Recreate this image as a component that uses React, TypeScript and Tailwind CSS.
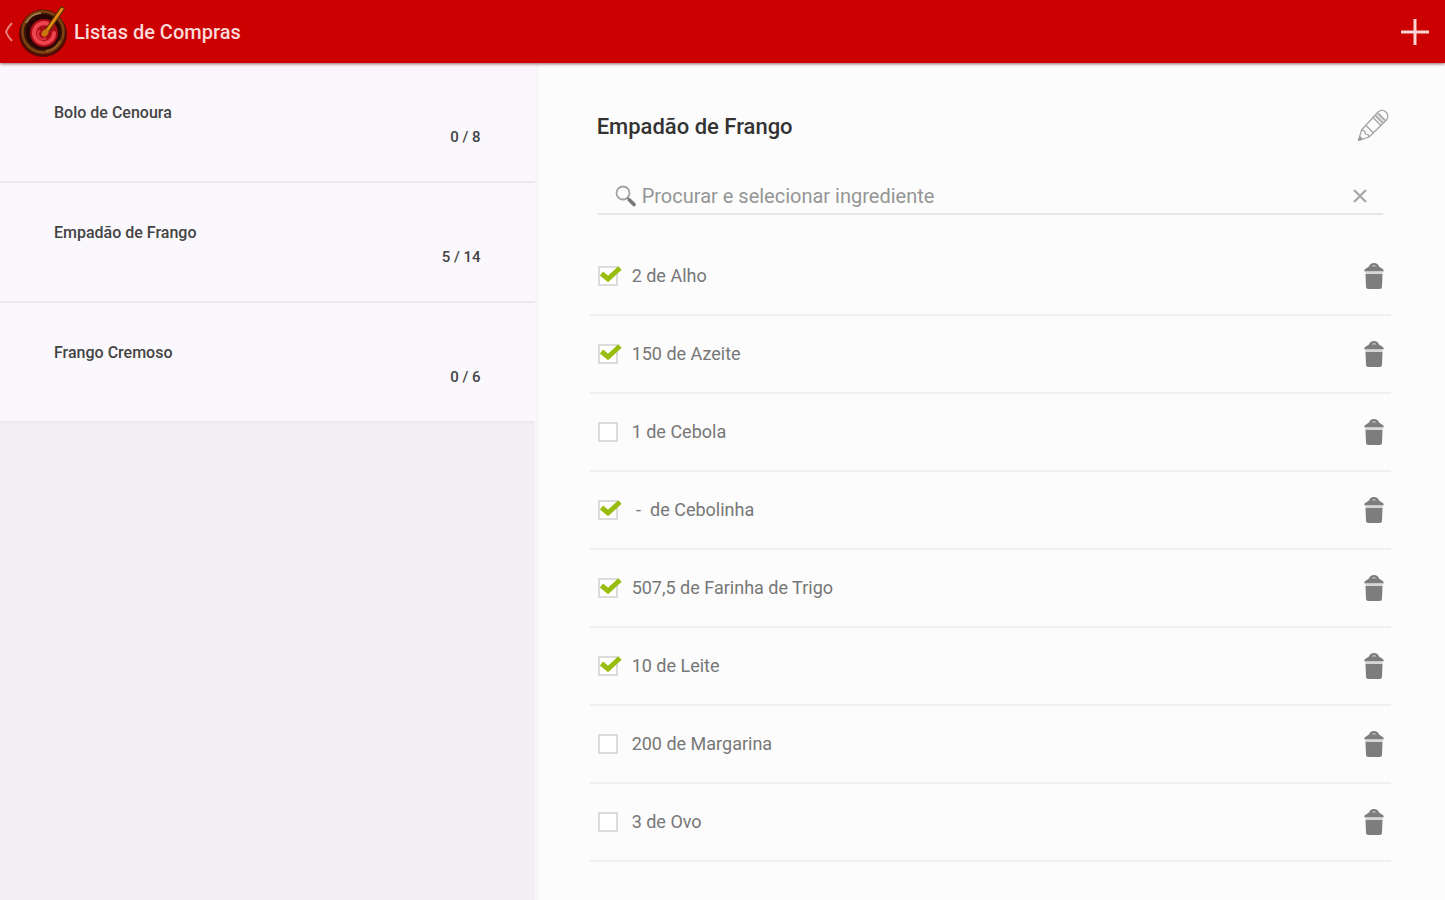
import { useState } from "react";

type ShoppingList = {
  id: string;
  name: string;
  done: number;
  total: number;
};

type Ingredient = {
  id: string;
  label: string;
  checked: boolean;
};

const LISTS: ShoppingList[] = [
  { id: "bolo", name: "Bolo de Cenoura", done: 0, total: 8 },
  { id: "empadao", name: "Empadão de Frango", done: 5, total: 14 },
  { id: "frango", name: "Frango Cremoso", done: 0, total: 6 },
];

const INGREDIENTS: Ingredient[] = [
  { id: "alho", label: "2 de Alho", checked: true },
  { id: "azeite", label: "150 de Azeite", checked: true },
  { id: "cebola", label: "1 de Cebola", checked: false },
  { id: "cebolinha", label: " -  de Cebolinha", checked: true },
  { id: "farinha", label: "507,5 de Farinha de Trigo", checked: true },
  { id: "leite", label: "10 de Leite", checked: true },
  { id: "margarina", label: "200 de Margarina", checked: false },
  { id: "ovo", label: "3 de Ovo", checked: false },
];

function Logo() {
  return (
    <svg viewBox="0 0 52 52" className="size-[52px]" aria-hidden="true">
      <ellipse cx="25" cy="28" rx="24" ry="23" fill="#5a0a04" />
      <circle cx="25" cy="26" r="22.5" fill="#3a1a08" />
      <circle cx="25" cy="26" r="20.5" fill="none" stroke="#80420f" strokeWidth="2.5" />
      <path d="M8 17a19 19 0 0 1 15-10" fill="none" stroke="#a8845a" strokeWidth="1.5" />
      <path d="M42 35a19 19 0 0 1-14 10" fill="none" stroke="#a4621e" strokeWidth="1.5" />
      <circle cx="25" cy="26" r="17.5" fill="#2a0505" />
      <circle cx="26" cy="27" r="14" fill="#a80c14" />
      <path
        d="M30 18a10 10 0 1 0 6 9"
        fill="none"
        stroke="#ee4450"
        strokeWidth="4"
        strokeLinecap="round"
      />
      <path d="M22 24a5 5 0 0 0 6 8" fill="none" stroke="#d8303a" strokeWidth="2.5" />
      <path d="M28 26L44 3" stroke="#5c2a04" strokeWidth="5" strokeLinecap="round" />
      <path d="M28 26L44 3" stroke="#e08a14" strokeWidth="3" strokeLinecap="round" />
      <ellipse cx="27" cy="27" rx="4" ry="3" transform="rotate(-50 27 27)" fill="#c8780f" />
    </svg>
  );
}

function SearchIcon() {
  return (
    <svg viewBox="0 0 22 22" className="size-[22px] shrink-0" fill="none" aria-hidden="true">
      <circle cx="9" cy="8" r="6.5" stroke="#a3a3a3" strokeWidth="1.8" />
      <path d="M13 12.5L15.5 15" stroke="#888" strokeWidth="2" />
      <path d="M15.5 15L20 19.5" stroke="#777" strokeWidth="3.6" strokeLinecap="round" />
    </svg>
  );
}

function PencilIcon() {
  return (
    <svg
      viewBox="0 0 32 34"
      className="h-[34px] w-8"
      fill="none"
      stroke="#a0a0a0"
      strokeWidth="1.2"
      strokeLinejoin="round"
      aria-hidden="true"
    >
      <path d="M1.5 32.5L4.5 22L21 4Q25 0.5 29 4Q32.5 8 29.5 12L12 29Z" />
      <path d="M4.5 22L7.5 23L8.5 26L11 26.5L12 29M9 17.5L16.5 25M16 9.5L24 17.5" />
      <path d="M18.5 7.5L26 15M21 5.5L28 12.5" stroke="#b0b0b0" strokeWidth="2.4" />
      <path d="M1.5 32.5L2.7 28.5L5.5 31.2Z" fill="#999" />
    </svg>
  );
}

function TrashIcon() {
  return (
    <svg viewBox="0 0 20 28" className="h-7 w-5" fill="#7d7d7d" aria-hidden="true">
      <path d="M5 4.5Q6 1 10 1Q14 1 15 4.5L19.5 7.5V9.5H0.5V7.5Z" />
      <path d="M7.5 4.5Q10 1.5 12.5 4.5Z" fill="#c4c4c4" />
      <path d="M1.5 9.5H18.5V12H1.5Z" fill="#d6d6d6" />
      <path d="M1.5 12H18.5L18 24.5Q18 27 15.5 27H4.5Q2 27 2 24.5Z" />
    </svg>
  );
}

type IngredientRowProps = {
  item: Ingredient;
  onToggle: (id: string) => void;
  onRemove: (id: string) => void;
};

function IngredientRow({ item, onToggle, onRemove }: IngredientRowProps) {
  return (
    <li className="flex h-[78px] items-center justify-between border-b-2 border-[#f0f0f0] pr-[7px] pl-2">
      <label className="flex items-center gap-[14px]">
        <span className="relative flex">
          <input
            type="checkbox"
            checked={item.checked}
            onChange={() => onToggle(item.id)}
            className="peer size-5 appearance-none border-2 border-[#dcdcdc] bg-white"
          />
          <svg
            viewBox="0 0 24 20"
            className="pointer-events-none absolute top-0 left-0 hidden h-5 w-6 peer-checked:block"
            fill="none"
            stroke="#98bd0e"
            strokeWidth="5"
            aria-hidden="true"
          >
            <path d="M3.5 7.5L10 13L22 2" />
          </svg>
        </span>
        <span className="text-[18px] leading-6 whitespace-pre text-[#777]">{item.label}</span>
      </label>
      <button type="button" aria-label={`Remover ${item.label}`} onClick={() => onRemove(item.id)}>
        <TrashIcon />
      </button>
    </li>
  );
}

export default function App() {
  const [selected, setSelected] = useState("empadao");
  const [items, setItems] = useState(INGREDIENTS);
  const [query, setQuery] = useState("");

  const handleToggle = (id: string) => {
    setItems((prev) => prev.map((i) => (i.id === id ? { ...i, checked: !i.checked } : i)));
  };

  const handleRemove = (id: string) => {
    setItems((prev) => prev.filter((i) => i.id !== id));
  };

  const current = LISTS.find((l) => l.id === selected);
  const visible = items.filter((i) => i.label.toLowerCase().includes(query.toLowerCase()));

  return (
    <div className="flex min-h-screen flex-col bg-[#fcfcfc] font-['Roboto',sans-serif]">
      <header className="z-10 flex h-[63px] items-center justify-between bg-[#cc0000] pt-px pr-4 pl-1 shadow-[0_1px_3px_rgba(90,0,0,0.6)]">
        <div className="flex items-center">
          <button type="button" aria-label="Voltar" className="flex items-center">
            <svg viewBox="0 0 10 20" className="h-5 w-[10px]" fill="none" stroke="#e88080" strokeWidth="2" aria-hidden="true">
              <path d="M8 1Q4 5 2 10Q4 15 8 19" />
            </svg>
          </button>
          <div className="ml-1">
            <Logo />
          </div>
          <h1 className="ml-1 text-[20px] leading-6 font-medium text-[#fbdada]">Listas de Compras</h1>
        </div>
        <button type="button" aria-label="Adicionar lista">
          <svg viewBox="0 0 28 28" className="size-7" stroke="#f9d4d4" strokeWidth="3" aria-hidden="true">
            <path d="M14 1V27M0 14H28" />
          </svg>
        </button>
      </header>

      <div className="flex flex-1">
        <nav className="w-[37%] shrink-0 bg-[#f1eff3]">
          <ul>
            {LISTS.map((list) => (
              <li key={list.id}>
                <button
                  type="button"
                  onClick={() => setSelected(list.id)}
                  className="flex h-[120px] w-full flex-col items-start border-b-2 border-[#ebe9ed] bg-[#faf8fc] px-[54px] pt-[38px] text-[16px] leading-6 font-medium text-[#444]"
                >
                  <span>{list.name}</span>
                  <span className="self-end text-[15px]">
                    {list.done} / {list.total}
                  </span>
                </button>
              </li>
            ))}
          </ul>
        </nav>

        <main className="flex-1 border-l-4 border-[#f8f7f9] pt-12 pr-[54px] pl-[51px]">
          <div className="flex h-8 items-center justify-between pr-[2px] pl-[7px]">
            <h2 className="text-[22px] leading-8 font-medium text-[#333]">{current?.name}</h2>
            <button type="button" aria-label="Editar lista" className="pb-1">
              <PencilIcon />
            </button>
          </div>

          <div className="mx-2 mt-9 flex h-9 items-center border-b-2 border-[#e6e6e6] px-4 pb-px">
            <SearchIcon />
            <input
              type="text"
              aria-label="Procurar e selecionar ingrediente"
              placeholder="Procurar e selecionar ingrediente"
              value={query}
              onChange={(e) => setQuery(e.target.value)}
              className="ml-[6px] min-w-0 flex-1 bg-transparent text-[20px] leading-6 text-[#555] outline-none placeholder:text-[#959595]"
            />
            <button type="button" aria-label="Limpar" onClick={() => setQuery("")}>
              <svg viewBox="0 0 14 14" className="size-[14px]" stroke="#a3a3a3" strokeWidth="2" aria-hidden="true">
                <path d="M1 1L13 13M13 1L1 13" />
              </svg>
            </button>
          </div>

          <ul className="mt-[23px]">
            {visible.map((item) => (
              <IngredientRow key={item.id} item={item} onToggle={handleToggle} onRemove={handleRemove} />
            ))}
          </ul>
        </main>
      </div>
    </div>
  );
}
